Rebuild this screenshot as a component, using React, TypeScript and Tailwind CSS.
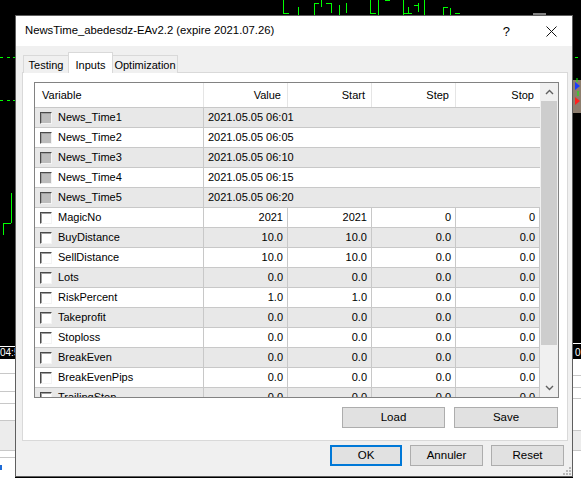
import React from "react";

type Row = {
  name: string;
  value: string;
  start?: string;
  step?: string;
  stop?: string;
  news?: boolean;
};

const rows: Row[] = [
  { name: "News_Time1", value: "2021.05.05 06:01", news: true },
  { name: "News_Time2", value: "2021.05.05 06:05", news: true },
  { name: "News_Time3", value: "2021.05.05 06:10", news: true },
  { name: "News_Time4", value: "2021.05.05 06:15", news: true },
  { name: "News_Time5", value: "2021.05.05 06:20", news: true },
  { name: "MagicNo", value: "2021", start: "2021", step: "0", stop: "0" },
  { name: "BuyDistance", value: "10.0", start: "10.0", step: "0.0", stop: "0.0" },
  { name: "SellDistance", value: "10.0", start: "10.0", step: "0.0", stop: "0.0" },
  { name: "Lots", value: "0.0", start: "0.0", step: "0.0", stop: "0.0" },
  { name: "RiskPercent", value: "1.0", start: "1.0", step: "0.0", stop: "0.0" },
  { name: "Takeprofit", value: "0.0", start: "0.0", step: "0.0", stop: "0.0" },
  { name: "Stoploss", value: "0.0", start: "0.0", step: "0.0", stop: "0.0" },
  { name: "BreakEven", value: "0.0", start: "0.0", step: "0.0", stop: "0.0" },
  { name: "BreakEvenPips", value: "0.0", start: "0.0", step: "0.0", stop: "0.0" },
  { name: "TrailingStop", value: "0.0", start: "0.0", step: "0.0", stop: "0.0" },
];

function Checkbox({ disabled }: { disabled?: boolean }) {
  return (
    <div
      className={
        "w-[12px] h-[12px] shrink-0 border border-t-[#4a4a4a] border-l-[#4a4a4a] border-r-[#f4f4f4] border-b-[#f4f4f4] shadow-[inset_1px_1px_0_#a0a0a0] " +
        (disabled ? "bg-[#bdbdbd]" : "bg-white")
      }
    />
  );
}

function Chevron({ up }: { up?: boolean }) {
  return (
    <svg width="9" height="6" viewBox="0 0 9 6">
      <path
        d={up ? "M1 5 L4.5 1.5 L8 5" : "M1 1 L4.5 4.5 L8 1"}
        fill="none"
        stroke="#606060"
        strokeWidth="1.4"
      />
    </svg>
  );
}

function Button({ label, w, primary }: { label: string; w: string; primary?: boolean }) {
  return (
    <div
      className={
        "h-[21px] flex items-center justify-center bg-[#e1e1e1] text-[11.5px] text-black " +
        w +
        (primary ? " border-2 border-[#0078d7]" : " border border-[#adadad]")
      }
    >
      {label}
    </div>
  );
}

export default function App() {
  return (
    <div
      className="relative w-[581px] h-[478px] overflow-hidden bg-black"
      style={{ fontFamily: "'Liberation Sans', Arial, sans-serif" }}
    >
      {/* background chart pieces */}
      <svg className="absolute left-0 top-0" width="581" height="478" viewBox="0 0 581 478">
        <g stroke="#00ff00" strokeWidth="1" fill="none" shapeRendering="crispEdges">
          <path d="M283.5 0 V13 M283 13.5 H289" />
          <path d="M298.5 7 V15" />
          <path d="M314.5 3 V15 M314 3.5 H319" />
          <path d="M321.5 0 V7" />
          <path d="M331.5 3 V13 M326 3.5 H331" />
          <path d="M339.5 5 V15" />
          <path d="M346.5 3 V13" />
          <path d="M370.5 0 V13 M370 13.5 H376" />
          <path d="M378.5 0 V15" />
          <path d="M385 0.5 H390" />
          <path d="M403.5 0 V15" />
          <path d="M408.5 7 V13 M404 13.5 H412" />
          <path d="M418.5 3 V12 M414 5.5 H418" />
          <path d="M424.5 0 V15" />
          <path d="M443.5 7 V15 M443 7.5 H448" />
          <path d="M450.5 8 V15" />
          <path d="M455 13.5 H460" />
          <path d="M0 57.5 H3 M7 57.5 H10 M13 57.5 H15" />
          <path d="M0 100.5 H3 M7 100.5 H10 M13 100.5 H15" />
          <path d="M575 57.5 H578" />
          <path d="M11.5 193 V223 M3 223.5 H11 M3.5 223 V235" />
        </g>
        <rect x="533" y="13" width="13" height="2" fill="#808080" />
        <rect x="573" y="80" width="8" height="33" fill="#8c7d6e" />
        <path d="M575 82 L580 86 L575 90 Z" fill="#1a3cff" />
        <path d="M575 97 L580 101 L575 105 Z" fill="#ff2020" />
        <path d="M577 78 V82 M578 91 V96" stroke="#00ff00" strokeWidth="1" />
        <rect x="0" y="346" width="15" height="1" fill="#ffffff" />
        <rect x="0" y="359" width="15" height="119" fill="#ffffff" />
        <rect x="0" y="420" width="15" height="30" fill="#ececec" />
        <rect x="0" y="373" width="15" height="1" fill="#c8c8c8" />
        <rect x="0" y="391" width="15" height="1" fill="#c8c8c8" />
        <rect x="0" y="403" width="15" height="1" fill="#c8c8c8" />
        <rect x="0" y="420" width="15" height="1" fill="#c8c8c8" />
        <rect x="0" y="450" width="15" height="1" fill="#c8c8c8" />
        <rect x="0" y="457" width="15" height="1" fill="#c8c8c8" />
        <rect x="0" y="465" width="2" height="5" fill="#1e6bd6" />
        <rect x="573" y="343" width="8" height="1" fill="#ffffff" />
        <rect x="573" y="359" width="8" height="119" fill="#ffffff" />
        <rect x="573" y="430" width="8" height="20" fill="#ececec" />
        <rect x="573" y="375" width="8" height="1" fill="#c8c8c8" />
        <rect x="573" y="387" width="8" height="1" fill="#c8c8c8" />
        <rect x="573" y="398" width="8" height="1" fill="#c8c8c8" />
        <rect x="573" y="430" width="8" height="1" fill="#c8c8c8" />
        <rect x="573" y="450" width="8" height="1" fill="#c8c8c8" />
      </svg>
      <div className="absolute left-0 top-[347px] text-[10px] leading-[11px] text-white">04:5</div>
      <div className="absolute left-[575px] top-[347px] text-[10px] leading-[11px] text-white">0</div>

      {/* dialog window */}
      <div className="absolute left-[15px] top-[15px] w-[558px] h-[462px] border border-[#5f5f5f] bg-[#f0f0f0] flex flex-col text-black">
        {/* title bar */}
        <div className="h-[30px] bg-white flex items-center pl-[9px] pr-[15px] shrink-0">
          <div className="text-[11.3px] leading-none flex-1">NewsTime_abedesdz-EAv2.2 (expire 2021.07.26)</div>
          <div className="text-[13px] leading-none mr-[36px]">?</div>
          <svg width="11" height="11" viewBox="0 0 11 11">
            <path d="M0.5 0.5 L10.5 10.5 M10.5 0.5 L0.5 10.5" stroke="#111" strokeWidth="1" />
          </svg>
        </div>

        {/* body */}
        <div className="flex-1 flex flex-col pl-[6px] pr-[4px]">
          {/* tabs */}
          <div className="h-[27px] flex items-end pl-[1px] relative z-10 -mb-px shrink-0">
            <div className="w-[46px] h-[18px] border border-b-0 border-[#d9d9d9] bg-[#f0f0f0] flex items-center justify-center text-[11px] pt-[2px]">
              Testing
            </div>
            <div className="w-[45px] h-[21px] border border-b-0 border-[#d9d9d9] bg-white flex items-start justify-center text-[11px] pt-[4px] -mx-px relative">
              Inputs
            </div>
            <div className="w-[66px] h-[18px] border border-b-0 border-[#d9d9d9] bg-[#f0f0f0] flex items-center justify-center text-[11px] pt-[2px]">
              Optimization
            </div>
          </div>

          {/* panel */}
          <div className="h-[369px] border border-[#d9d9d9] bg-white flex flex-col shrink-0">
            {/* grid */}
            <div className="ml-[11px] mt-[9px] w-[525px] h-[316px] border border-[#828282] flex overflow-hidden text-[11px]">
              <div className="w-[505px] flex flex-col overflow-hidden">
                {/* header */}
                <div className="h-[24px] flex shrink-0 bg-white">
                  <div className="w-[169px] border-r border-[#e5e5e5] flex items-center pl-[7px]">Variable</div>
                  <div className="w-[84px] border-r border-[#e5e5e5] flex items-center justify-end pr-[6px]">Value</div>
                  <div className="w-[84px] border-r border-[#e5e5e5] flex items-center justify-end pr-[6px]">Start</div>
                  <div className="w-[84px] border-r border-[#e5e5e5] flex items-center justify-end pr-[6px]">Step</div>
                  <div className="w-[84px] flex items-center justify-end pr-[6px]">Stop</div>
                </div>
                {rows.map((r, i) => (
                  <div
                    key={r.name}
                    className={
                      "h-[20px] shrink-0 flex border-t border-[#c8c8c8] " +
                      (i % 2 === 0 ? "bg-[#e8e8e8]" : "bg-white")
                    }
                  >
                    <div className="w-[169px] border-r border-[#c8c8c8] flex items-center pl-[5px] gap-[6px]">
                      <Checkbox disabled={r.news} />
                      <span>{r.name}</span>
                    </div>
                    {r.news ? (
                      <div className="flex-1 flex items-center pl-[4px]">{r.value}</div>
                    ) : (
                      <>
                        <div className="w-[84px] border-r border-[#c8c8c8] flex items-center justify-end pr-[4px]">{r.value}</div>
                        <div className="w-[84px] border-r border-[#c8c8c8] flex items-center justify-end pr-[4px]">{r.start}</div>
                        <div className="w-[84px] border-r border-[#c8c8c8] flex items-center justify-end pr-[4px]">{r.step}</div>
                        <div className="w-[84px] border-r border-[#c8c8c8] flex items-center justify-end pr-[4px]">{r.stop}</div>
                      </>
                    )}
                  </div>
                ))}
              </div>
              {/* scrollbar */}
              <div className="w-[18px] bg-[#f0f0f0] flex flex-col">
                <div className="h-[18px] flex items-center justify-center shrink-0">
                  <Chevron up />
                </div>
                <div className="h-[244px] mx-[1px] bg-[#cdcdcd] shrink-0" />
                <div className="flex-1" />
                <div className="h-[18px] flex items-center justify-center shrink-0">
                  <Chevron />
                </div>
              </div>
            </div>

            {/* load / save */}
            <div className="mt-[9px] flex justify-end gap-[9px] pr-[9px]">
              <Button label="Load" w="w-[103px]" />
              <Button label="Save" w="w-[104px]" />
            </div>
          </div>

          {/* bottom buttons */}
          <div className="mt-[4px] flex justify-end gap-[8px] pr-[4px]">
            <Button label="OK" w="w-[72px]" primary />
            <Button label="Annuler" w="w-[73px]" />
            <Button label="Reset" w="w-[73px]" />
          </div>
        </div>

        {/* resize grip */}
        <svg className="absolute right-[1px] bottom-[1px]" width="8" height="8" viewBox="0 0 8 8">
          <g fill="#b8b8b8">
            <rect x="6" y="0" width="2" height="2" />
            <rect x="3" y="3" width="2" height="2" />
            <rect x="6" y="3" width="2" height="2" />
            <rect x="0" y="6" width="2" height="2" />
            <rect x="3" y="6" width="2" height="2" />
            <rect x="6" y="6" width="2" height="2" />
          </g>
        </svg>
      </div>
    </div>
  );
}
